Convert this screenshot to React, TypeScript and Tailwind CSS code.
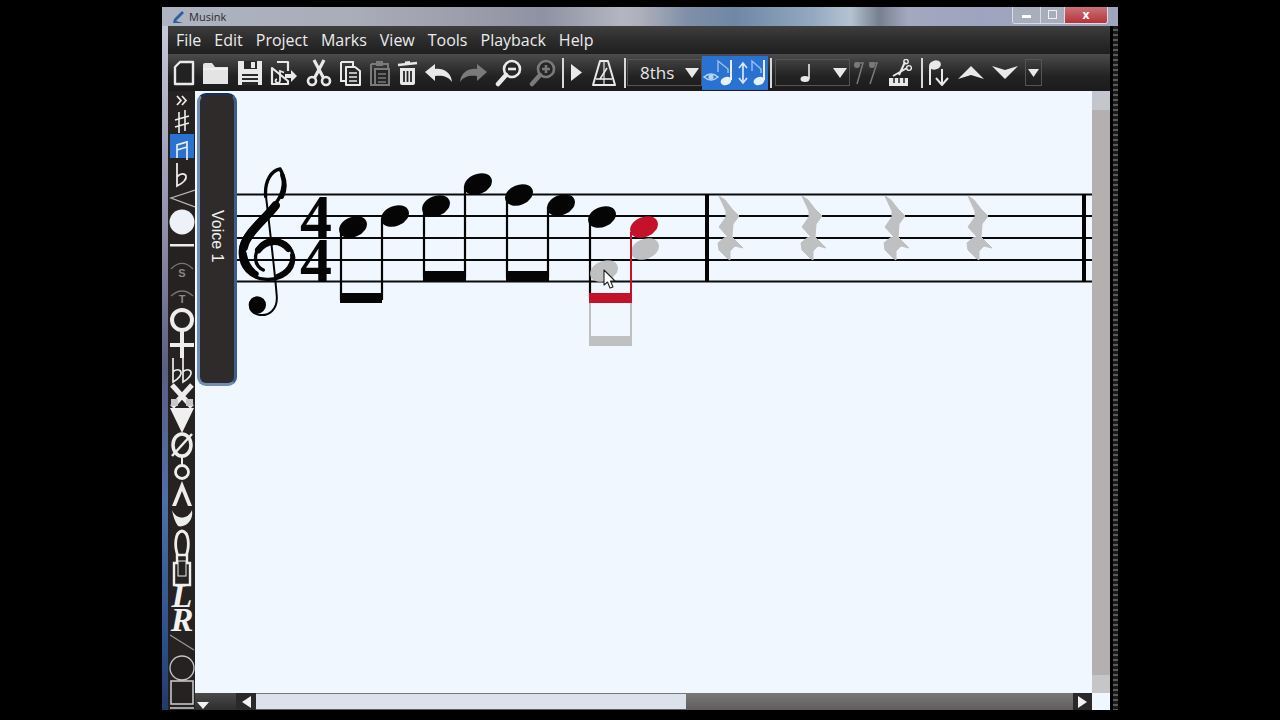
import React from "react";

const W = "#e9e9e9";
const G = "#7a7a7a";

function Ic({ w, h, ml, children }: { w: number; h: number; ml: string; children: React.ReactNode }) {
  return (
    <svg width={w} height={h} viewBox={`0 0 ${w} ${h}`} className={`shrink-0 ${ml}`}>
      {children}
    </svg>
  );
}

function Sep({ ml }: { ml: string }) {
  return <div className={`w-[2px] h-[30px] bg-[#d8d8d8] shrink-0 ${ml}`} />;
}

function Tri({ w = 14, h = 10, fill = W }: { w?: number; h?: number; fill?: string }) {
  return (
    <svg width={w} height={h} viewBox={`0 0 ${w} ${h}`} className="shrink-0">
      <path d={`M0 0H${w}L${w / 2} ${h}Z`} fill={fill} />
    </svg>
  );
}

function Toolbar() {
  return (
    <div className="h-[37px] flex items-center bg-[linear-gradient(180deg,#4c4c4c_0%,#3a3a3a_25%,#232323_60%,#1b1b1b_100%)] shrink-0">
      <Ic w={22} h={26} ml="ml-[5px]">
        <path d="M7 2H20V24H2V7Z" fill="#222" stroke={W} strokeWidth="2.4" strokeLinejoin="round" />
      </Ic>
      <Ic w={27} h={24} ml="ml-[7px]">
        <path d="M1 4Q1 2 3 2H10L13 6H26V23H1Z" fill="#e4e4e4" />
        <path d="M1 8H26" stroke="#fafafa" strokeWidth="1" />
      </Ic>
      <Ic w={26} h={26} ml="ml-[8px]">
        <path d="M1 1H25V25H1Z" fill={W} />
        <path d="M7 1H20V9H7Z" fill="#2a2a2a" />
        <path d="M14 2H18V8H14Z" fill={W} />
        <path d="M5 14H21V25H5Z" fill="#2a2a2a" />
        <path d="M5 17H21M5 21H21" stroke={W} strokeWidth="2" />
      </Ic>
      <Ic w={27} h={26} ml="ml-[7px]">
        <path d="M7 2H18V11M18 21V24H2V8Z" fill="none" stroke={W} strokeWidth="2.2" strokeLinejoin="round" />
        <path d="M7 19a2.2 2 0 1 0 3 2V11l4 1.5" fill="none" stroke={W} strokeWidth="1.8" />
        <path d="M15 14H21V10L27 16L21 22V18H15Z" fill={W} />
      </Ic>
      <Ic w={26} h={28} ml="ml-[9px]">
        <circle cx="6" cy="22" r="4" fill="none" stroke={W} strokeWidth="2.6" />
        <circle cx="20" cy="22" r="4" fill="none" stroke={W} strokeWidth="2.6" />
        <path d="M8.5 19L18 1" stroke={W} strokeWidth="3.2" />
        <path d="M17.5 19L8 1" stroke={W} strokeWidth="3.2" />
      </Ic>
      <Ic w={21} h={26} ml="ml-[8px]">
        <path d="M1 2H13V6M5 21H1V2" fill="none" stroke={W} strokeWidth="2" />
        <path d="M6 7H15L20 11V25H6Z" fill="#262626" stroke={W} strokeWidth="2" strokeLinejoin="round" />
        <path d="M9 13H17M9 17H17M9 21H17" stroke={W} strokeWidth="1.7" />
      </Ic>
      <Ic w={21} h={26} ml="ml-[8px]">
        <path d="M2 4H19V22M5 25H2V4" fill="none" stroke={G} strokeWidth="2" />
        <path d="M7 1H14V6H7Z" fill={G} />
        <path d="M6 9H20V25H6Z" fill="#262626" stroke={G} strokeWidth="2" />
        <path d="M9 14H17M9 18H17M9 22H17" stroke={G} strokeWidth="1.6" />
      </Ic>
      <Ic w={21} h={26} ml="ml-[7px]">
        <path d="M1 5L20 3" stroke={W} strokeWidth="2.5" />
        <path d="M8 3L13 2.5" stroke={W} strokeWidth="3" />
        <path d="M3 8H18V23Q18 25 16 25H5Q3 25 3 23Z" fill={W} />
        <path d="M7 11V22M10.5 11V22M14 11V22" stroke="#262626" strokeWidth="1.8" />
      </Ic>
      <Ic w={28} h={20} ml="ml-[7px]">
        <path d="M0 9L10 1V6C18 5 26 9 27 19C23 13 17 12 10 13V18Z" fill={W} />
      </Ic>
      <Ic w={28} h={20} ml="ml-[7px]">
        <path d="M27 9L17 1V6C9 5 1 9 0 19C4 13 10 12 17 13V18Z" fill={G} />
      </Ic>
      <Ic w={27} h={28} ml="ml-[7px]">
        <circle cx="17" cy="10" r="8" fill="#262626" stroke={W} strokeWidth="2.6" />
        <path d="M13 10H21" stroke={W} strokeWidth="2.6" />
        <path d="M11 16L3 25" stroke={W} strokeWidth="4.5" strokeLinecap="round" />
      </Ic>
      <Ic w={27} h={28} ml="ml-[7px]">
        <circle cx="17" cy="10" r="8" fill="#262626" stroke={G} strokeWidth="2.6" />
        <path d="M13 10H21M17 6V14" stroke={G} strokeWidth="2.6" />
        <path d="M11 16L3 25" stroke={G} strokeWidth="4.5" strokeLinecap="round" />
      </Ic>
      <Sep ml="ml-[6px]" />
      <Ic w={12} h={19} ml="ml-[6px]">
        <path d="M1 1L12 9.5L1 18Z" fill={W} />
      </Ic>
      <Ic w={24} h={26} ml="ml-[10px]">
        <path d="M8 1H16L23 25H1Z" fill="none" stroke={W} strokeWidth="2" strokeLinejoin="round" />
        <path d="M4 19H20" stroke={W} strokeWidth="1.6" />
        <path d="M12 1V25" stroke={W} strokeWidth="1.2" />
        <path d="M8 19L15 8" stroke={W} strokeWidth="1.6" />
      </Ic>
      <Sep ml="ml-[8px]" />
      <div className="ml-[1px] w-[75px] h-[27px] border border-[#555] flex items-center justify-between pl-[12px] pr-[2px] shrink-0">
        <span className="text-[17px] leading-none text-[#e6e6e6]">8ths</span>
        <Tri />
      </div>
      <div className="w-[34px] h-[34px] bg-[#2a72d2] flex items-center justify-center shrink-0">
        <svg width="32" height="28" viewBox="0 0 32 28">
          <path d="M1 18Q8 12 15 18Q8 24 1 18Z" fill="none" stroke="#b9d3f2" strokeWidth="1.5" />
          <circle cx="8" cy="18" r="2.6" fill="#b9d3f2" />
          <path d="M15 13V2L25 10V14" fill="none" stroke="#9cc0ec" strokeWidth="1.4" />
          <path d="M28 1V21" stroke="#e8f0fa" strokeWidth="2" />
          <ellipse cx="23" cy="22" rx="5.5" ry="4" fill="#e8f0fa" transform="rotate(-18 23 22)" />
        </svg>
      </div>
      <div className="w-[32px] h-[34px] bg-[#2a72d2] flex items-center justify-center shrink-0">
        <svg width="30" height="28" viewBox="0 0 30 28">
          <path d="M6 5V23M2 9L6 4L10 9M2 19L6 24L10 19" fill="none" stroke="#d7e6f8" strokeWidth="1.7" />
          <path d="M15 12V2L24 10V14" fill="none" stroke="#9cc0ec" strokeWidth="1.4" />
          <path d="M27 1V21" stroke="#e8f0fa" strokeWidth="2" />
          <ellipse cx="22" cy="22" rx="5.5" ry="4" fill="#e8f0fa" transform="rotate(-18 22 22)" />
        </svg>
      </div>
      <Sep ml="ml-[2px]" />
      <div className="ml-[3px] w-[75px] h-[27px] border border-[#555] flex items-center justify-end pr-[2px] relative shrink-0">
        <svg width="12" height="22" viewBox="0 0 12 22" className="mr-[21px]">
          <path d="M9 2V17" stroke={W} strokeWidth="1.6" />
          <ellipse cx="5" cy="17" rx="4.5" ry="3" fill={W} />
        </svg>
        <Tri />
      </div>
      <Ic w={26} h={26} ml="ml-[4px]">
        <path d="M1 3H9L3 24" fill="none" stroke={G} strokeWidth="1.5" />
        <circle cx="3" cy="5" r="3" fill={G} />
        <path d="M15 3H23L16 24" fill="none" stroke={G} strokeWidth="1.5" />
        <circle cx="18" cy="5" r="3" fill={G} />
      </Ic>
      <Ic w={24} h={28} ml="ml-[8px]">
        <path d="M1 19H20V27H1Z" fill={W} />
        <path d="M6 19V24M11 19V24M16 19V24" stroke="#222" strokeWidth="1.5" />
        <path d="M5 17L19 9M11 16L17 3" stroke={W} strokeWidth="2" />
        <circle cx="21" cy="9" r="2.4" fill="none" stroke={W} strokeWidth="1.4" />
        <circle cx="18" cy="2.6" r="2.2" fill="none" stroke={W} strokeWidth="1.4" />
      </Ic>
      <Sep ml="ml-[9px]" />
      <Ic w={22} h={27} ml="ml-[5px]">
        <path d="M2 26V7" stroke={W} strokeWidth="2" />
        <ellipse cx="7" cy="6" rx="6" ry="4.5" fill={W} transform="rotate(-15 7 6)" />
        <path d="M14 10V25M8 19L14 26L20 19" fill="none" stroke={W} strokeWidth="2" />
      </Ic>
      <Ic w={26} h={13} ml="ml-[8px]">
        <path d="M0 13L13 0L26 13L13 9Z" fill={W} />
      </Ic>
      <Ic w={26} h={13} ml="ml-[8px]">
        <path d="M0 0L13 13L26 0L13 4Z" fill={W} />
      </Ic>
      <div className="ml-[7px] w-[17px] h-[27px] border border-[#555] flex items-center justify-center shrink-0">
        <Tri w={11} h={8} />
      </div>
    </div>
  );
}

function Strip() {
  const L = "#ededed";
  return (
    <svg viewBox="168 91 27 619" width="27" height="619" className="shrink-0 bg-[#262222] block">
      <rect x="170" y="134" width="24" height="24" fill="#2a72d2" />
      <path d="M177 96L181 100.5L177 105M182 96L186 100.5L182 105" fill="none" stroke={L} strokeWidth="1.7" />
      <path d="M179 112V133M185 110V131M175 120L189 116M175 127L189 123" stroke={L} strokeWidth="1.6" />
      <path d="M177 158V145L187 142V160M177 150L187 147" fill="none" stroke={L} strokeWidth="1.7" />
      <path d="M177 163V186C181 184 187 181 186 176C185 173 180 173 177 177" fill="none" stroke={L} strokeWidth="1.8" />
      <path d="M195 190L171 198L195 207" fill="none" stroke="#b9b9b9" strokeWidth="1.3" />
      <circle cx="182" cy="222" r="12.5" fill="#eef2f8" />
      <rect x="170" y="244" width="24" height="2.5" fill={L} />
      <path d="M171 269Q182 258 193 269" fill="none" stroke="#777" strokeWidth="1.2" />
      <text x="182" y="277" fontSize="11" fontWeight="700" fill="#888" textAnchor="middle" fontFamily="'Liberation Sans', sans-serif">S</text>
      <path d="M171 296Q182 286 193 296" fill="none" stroke="#777" strokeWidth="1.2" />
      <text x="182" y="303" fontSize="11" fontWeight="700" fill="#888" textAnchor="middle" fontFamily="'Liberation Sans', sans-serif">T</text>
      <circle cx="182" cy="320" r="10" fill="none" stroke={L} strokeWidth="4" />
      <path d="M182 330V358M170 345H194" stroke={L} strokeWidth="4" />
      <path d="M173 358V382C178 379 182 376 181 372C180 369 175 369 173 372M183 358V382C188 379 192 376 191 372C190 369 185 369 183 372" fill="none" stroke={L} strokeWidth="1.7" />
      <path d="M172 385L192 407M192 385L172 407" stroke={L} strokeWidth="5" />
      <rect x="171" y="399" width="7" height="7" fill="#c8c8c8" />
      <rect x="186" y="399" width="7" height="7" fill="#c8c8c8" />
      <path d="M170 408H194L182 433Z" fill="#f0f0f0" />
      <ellipse cx="182" cy="445" rx="9" ry="11" fill="none" stroke={L} strokeWidth="3.5" />
      <path d="M172 456L192 434" stroke={L} strokeWidth="2.5" />
      <path d="M182 456V466" stroke={L} strokeWidth="2" />
      <circle cx="182" cy="472" r="6.5" fill="none" stroke={L} strokeWidth="2.8" />
      <path d="M182 481L172 506H176L182 491L188 506H192Z" fill={L} />
      <path d="M172 510C176 520 188 520 192 510C194 522 184 528 178 526C175 522 173 516 172 510Z" fill={L} />
      <path d="M178 556C174 546 175 532 182 531C189 532 190 546 186 556" fill="none" stroke={L} strokeWidth="2.8" />
      <path d="M177 555H187V563H190V585H174V563H177Z" fill="none" stroke={L} strokeWidth="2.4" />
      <rect x="178" y="561" width="8" height="15" fill="#262222" stroke={L} strokeWidth="1" />
      <text x="182" y="607" fontSize="34" fontStyle="italic" fontWeight="700" fill="#f2f2f2" textAnchor="middle" fontFamily="'Liberation Serif', serif">L</text>
      <text x="182" y="631" fontSize="34" fontStyle="italic" fontWeight="700" fill="#f2f2f2" textAnchor="middle" fontFamily="'Liberation Serif', serif">R</text>
      <path d="M170 635L194 650" stroke="#9a9a9a" strokeWidth="1.2" />
      <circle cx="182" cy="668" r="12" fill="none" stroke="#c5c5c5" strokeWidth="1.3" />
      <rect x="171" y="681" width="22" height="23" fill="none" stroke="#d0d0d0" strokeWidth="1.5" />
      <path d="M170 708H194" stroke="#d0d0d0" strokeWidth="1.5" />
    </svg>
  );
}

function Head({ x, y, fill = "#050505" }: { x: number; y: number; fill?: string }) {
  return <ellipse cx={x} cy={y} rx="14.5" ry="10" fill={fill} transform={`rotate(-22 ${x} ${y})`} />;
}

const REST =
  "M8 16L14 20L21 29L28 36L22 44L21 57L32 68L24 66L19 71L19 80L16 78L8 70L7 63L13 58L17 57L8 47L15 37L15 31Z";

function Score() {
  const gray = "#bfc0c2";
  const red = "#c4122b";
  return (
    <svg viewBox="237 91 855 602" width="855" height="602" className="block shrink-0">
      {[194.5, 216, 238, 260, 281.5].map((y) => (
        <path key={y} d={`M237 ${y}H1092`} stroke="#0a0a0a" strokeWidth="2" />
      ))}
      <g transform="translate(235 160) scale(0.3333)" fill="none" stroke="#050505" strokeLinecap="round">
        <path d="M92 100C100 170 120 340 125 405C130 450 100 468 75 465C55 462 45 450 45 440" strokeWidth="6" />
        <circle cx="67" cy="435" r="26" fill="#050505" stroke="none" />
        <path d="M85 330C58 318 52 282 80 252C110 226 168 240 176 292C178 335 140 360 95 358C45 356 14 322 16 272C20 215 85 175 122 130C148 98 152 52 135 27C112 30 88 60 92 110" strokeWidth="10" />
        <path d="M26 262C34 220 90 178 122 136" strokeWidth="26" />
        <path d="M26 280C30 305 42 328 62 342" strokeWidth="18" />
        <path d="M140 110C150 90 150 65 142 45" strokeWidth="14" />
        <path d="M70 270C92 240 135 236 160 266" strokeWidth="20" />
        <path d="M172 285C176 312 158 338 125 350" strokeWidth="14" />
      </g>
      <text x="316" y="239" fontSize="64" fontWeight="700" fill="#050505" textAnchor="middle" fontFamily="'Liberation Serif', serif">4</text>
      <text x="316" y="282" fontSize="64" fontWeight="700" fill="#050505" textAnchor="middle" fontFamily="'Liberation Serif', serif">4</text>

      <path d="M341 228V300M382 218V300M424 208V278M465 186V278M507 197V278M548 207V278M590 220V298" stroke="#050505" strokeWidth="2.2" />
      <rect x="340" y="293" width="42" height="10" fill="#050505" />
      <rect x="423" y="271" width="43" height="10" fill="#050505" />
      <rect x="506" y="271" width="43" height="10" fill="#050505" />
      <Head x={353} y={227} />
      <Head x={395} y={216} />
      <Head x={436} y={206} />
      <Head x={478} y={184} />
      <Head x={519} y={195} />
      <Head x={561} y={205} />
      <Head x={602} y={217} />

      <path d="M590 302V342M631 302V342" stroke={gray} strokeWidth="2" />
      <rect x="589" y="336" width="43" height="10" fill={gray} />
      <Head x={604} y={271} fill={gray} />
      <Head x={645} y={249} fill={gray} />
      <path d="M631 232V296" stroke={red} strokeWidth="2" />
      <rect x="589" y="293" width="43" height="10" fill={red} />
      <Head x={644} y={227} fill={red} />

      <rect x="705" y="194" width="4" height="88" fill="#050505" />
      <rect x="1082" y="194" width="4" height="88" fill="#050505" />

      {[960, 877, 794, 711].map((x) => (
        <path key={x} d={REST} fill={gray} stroke={gray} strokeWidth="1" strokeLinejoin="round" transform={`translate(${x} 180)`} />
      ))}

      <path d="M604 270V285L607.5 282L610 288L613 287L610.5 281L615 281Z" fill="#fff" stroke="#222" strokeWidth="1.1" strokeLinejoin="round" />
    </svg>
  );
}

export default function App() {
  return (
    <div className="w-[1280px] h-[720px] bg-black overflow-hidden pt-[7px] pl-[162px] font-['Open_Sans',sans-serif]">
      <div className="w-[956px] h-[703px] flex flex-col">
        <div className="h-[19px] shrink-0 flex items-center bg-[linear-gradient(90deg,#aeb4c2_0%,#a9adb8_20%,#9fa0ad_30%,#8f92a4_40%,#b3b5c0_48%,#aeb0bb_50%,#7f8fa8_55%,#6f88a6_60%,#93a8c0_68%,#b4c3d2_72%,#77808f_75%,#a4a8c0_78%,#9ea3bf_85%,#a0a5bd_100%)] relative">
          <svg width="14" height="14" viewBox="0 0 14 14" className="ml-[9px] shrink-0">
            <path d="M11 1L3 9L2 13L12 13L5 11L13 3Z" fill="#2f5f9e" />
          </svg>
          <span className="ml-[4px] text-[11px] leading-none text-[#2a2a2a]">Musink</span>
          <div className="ml-auto mr-[10px] mt-[-3px] flex h-[17px] border border-[#d8dce4] border-t-0 rounded-b-[3px] overflow-hidden">
            <div className="w-[27px] bg-[#a9aebd] flex items-center justify-center">
              <div className="w-[9px] h-[3px] bg-white mt-[4px]" />
            </div>
            <div className="w-[24px] bg-[#a7adbc] border-l border-[#d8dce4] flex items-center justify-center">
              <div className="w-[9px] h-[9px] border border-[#f0f0f0]" />
            </div>
            <div className="w-[43px] bg-[linear-gradient(180deg,#c9737a,#b8323a)] border-l border-[#d8dce4] flex items-center justify-center text-white text-[12px] leading-none font-bold">
              x
            </div>
          </div>
        </div>
        <div className="flex flex-1 min-h-0">
          <div className="w-[6px] shrink-0 bg-[linear-gradient(180deg,#c4c8d8_0%,#8f8ea8_30%,#5b5f82_50%,#4d6fa8_70%,#2c4f8a_90%,#243a68_100%)]" />
          <div className="w-[942px] shrink-0 flex flex-col">
            <div className="h-[28px] shrink-0 flex items-center gap-[13px] pl-[8px] text-[16px] leading-none text-[#ececec] bg-[linear-gradient(180deg,#3e3e3e_0%,#2c2c2c_50%,#1f1f1f_100%)]">
              <span>File</span>
              <span>Edit</span>
              <span>Project</span>
              <span>Marks</span>
              <span>View</span>
              <span>Tools</span>
              <span>Playback</span>
              <span>Help</span>
            </div>
            <Toolbar />
            <div className="flex flex-1 min-h-0">
              <Strip />
              <div className="flex-1 flex flex-col min-w-0">
                <div className="flex flex-1 min-h-0">
                  <div className="w-[897px] h-[602px] bg-[#f0f7fe] flex shrink-0">
                    <div className="ml-[2px] w-[40px] shrink-0">
                      <div className="w-[40px] h-[293px] mt-[2px] rounded-[9px] bg-[#2f2b2b] border-[3px] border-[#6f8db5] border-t-[#1d2f4e] border-r-[#3c5c8c] flex items-center justify-center pb-[6px]">
                        <span className="[writing-mode:vertical-rl] text-[16px] leading-none text-[#f0f0f0] font-['Liberation_Sans',sans-serif]">
                          Voice 1
                        </span>
                      </div>
                    </div>
                    <Score />
                  </div>
                  <div className="w-[18px] shrink-0 bg-[#b4b0b0] flex flex-col justify-between">
                    <div className="h-[19px] bg-[#c3c6cc]" />
                    <div className="h-[18px] bg-[#c6c6c8]" />
                  </div>
                </div>
                <div className="h-[17px] shrink-0 flex">
                  <div className="w-[897px] flex items-center bg-[linear-gradient(180deg,#7a7878,#605c5c)]">
                    <div className="w-[41px] h-full bg-[linear-gradient(180deg,#4a4a4a,#2e2e2e)] flex items-end pl-[2px] pb-[1px] shrink-0">
                      <Tri w={12} h={7} fill="#f2f2f2" />
                    </div>
                    <div className="w-[20px] h-full bg-[#2a2828] flex items-center justify-center shrink-0">
                      <svg width="9" height="12" viewBox="0 0 9 12">
                        <path d="M9 0V12L0 6Z" fill="#f2f2f2" />
                      </svg>
                    </div>
                    <div className="w-[430px] h-[15px] bg-[#dbe2ec] shrink-0" />
                    <div className="ml-auto w-[19px] h-[17px] bg-[#2a2828] flex items-center justify-center shrink-0">
                      <svg width="9" height="12" viewBox="0 0 9 12">
                        <path d="M0 0V12L9 6Z" fill="#f2f2f2" />
                      </svg>
                    </div>
                  </div>
                  <div className="w-[18px] bg-[#f0f7fe]" />
                </div>
              </div>
            </div>
          </div>
          <div className="w-[8px] shrink-0 flex">
            <div className="w-[3px] bg-black" />
            <div className="flex-1 bg-[repeating-linear-gradient(180deg,#1a1a1a_0px,#1a1a1a_3px,#5a5a5a_3px,#5a5a5a_5px)]" />
          </div>
        </div>
      </div>
    </div>
  );
}
